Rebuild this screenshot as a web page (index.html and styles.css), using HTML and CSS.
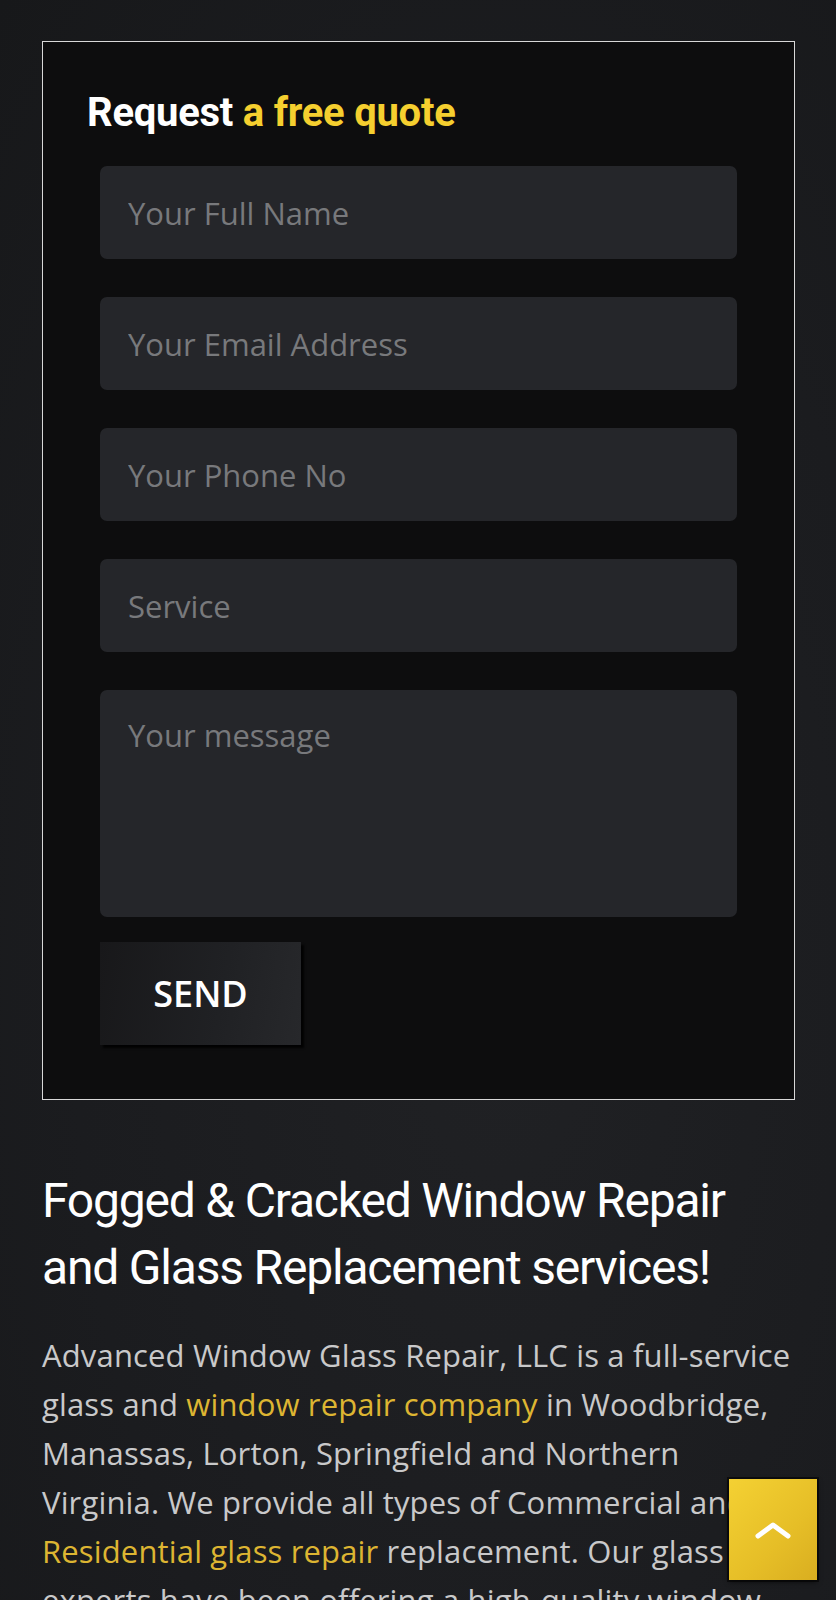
FILE: index.html
```
<!DOCTYPE html>
<html lang="en">
<head>
  <meta charset="UTF-8">
  <title>Request a free quote</title>
  <link rel="stylesheet" href="styles.css">
</head>
<body>

  <div class="page">
    <div class="quote-box">
      <h3 class="quote-title">Request <span>a free quote</span></h3>

      <form class="quote-form" onsubmit="return false;">
        <input type="text" placeholder="Your Full Name">
        <input type="email" placeholder="Your Email Address">
        <input type="tel" placeholder="Your Phone No">
        <input type="text" placeholder="Service">
        <textarea placeholder="Your message"></textarea>
        <button type="submit" class="send">SEND</button>
      </form>
    </div>

    <h1 class="intro-title">Fogged &amp; Cracked Window Repair and Glass Replacement services!</h1>

    <p class="intro-text">
      Advanced Window Glass Repair, LLC is a full-service glass and <a href="#">window repair company</a> in Woodbridge, Manassas, Lorton, Springfield and Northern Virginia. We provide all types of Commercial and <a href="#">Residential glass repair</a> replacement. Our glass experts have been offering a high-quality window repair service for many years.
    </p>
  </div>

  <a href="#" class="to-top" aria-label="Back to top">
    <svg width="38" height="24" viewBox="0 0 38 24">
      <polyline points="4,18 19,7 34,18" fill="none" stroke="#fff" stroke-width="5" stroke-linecap="round" stroke-linejoin="round"/>
    </svg>
  </a>

</body>
</html>
```

FILE: styles.css
```
:root {
  --bg: #1c1d20;
  --box: #0d0d0e;
  --field: #25262a;
  --gold: #f5cf2f;
  --link: #ddb532;
}

html, body {
  margin: 0;
  padding: 0;
}

body {
  background: radial-gradient(ellipse at 60% 60%, #202124 0%, #1b1c1f 60%, #17181a 100%);
  background-color: var(--bg);
  min-height: 1600px;
  font-family: 'Open Sans', sans-serif;
  color: #fff;
}

.page {
  padding: 41px 41px 0 42px;
}

.quote-box {
  background-color: var(--box);
  border: 1px solid #d8d8d8;
  padding: 47px 0 54px 44px;
}

.quote-title {
  font-family: Roboto, sans-serif;
  font-weight: 700;
  font-size: 40px;
  line-height: 48px;
  letter-spacing: -0.25px;
  margin: 0 0 29px;
  color: #fff;
}

.quote-title span {
  color: var(--gold);
}

.quote-form {
  margin-left: 13px;
  width: 637px;
}

.quote-form input,
.quote-form textarea {
  display: block;
  box-sizing: border-box;
  width: 100%;
  height: 93px;
  margin: 0 0 38px;
  padding: 0 28px;
  border: none;
  border-radius: 7px;
  background-color: var(--field);
  font-family: 'Open Sans', sans-serif;
  font-size: 31px;
  color: #ddd;
  outline: none;
}

.quote-form textarea {
  height: 227px;
  padding: 24px 28px;
  margin-bottom: 25px;
  resize: none;
}

.quote-form ::placeholder {
  color: #78797c;
}

button.send {
  display: block;
  width: 201px;
  height: 103px;
  border: none;
  background: linear-gradient(100deg, #18181a 0%, #202124 60%, #27282b 100%);
  box-shadow: 3px 3px 2px rgba(0, 0, 0, 0.85);
  font-family: 'Open Sans', sans-serif;
  font-weight: 600;
  font-size: 36px;
  color: #fff;
  cursor: pointer;
}

.intro-title {
  font-family: Roboto, sans-serif;
  font-weight: 400;
  font-size: 48px;
  line-height: 67px;
  letter-spacing: -1.2px;
  margin: 67px 0 30px;
  color: #fff;
}

.intro-text {
  font-size: 31px;
  line-height: 49px;
  letter-spacing: 0.15px;
  color: #c9c9ca;
  margin: 0;
}

.intro-text a {
  color: var(--link);
  text-decoration: none;
}

.to-top {
  position: fixed;
  right: 19px;
  bottom: 20px;
  width: 88px;
  height: 101px;
  display: flex;
  align-items: center;
  justify-content: center;
  background: linear-gradient(135deg, #f4d133 0%, #e6be27 60%, #d9ae20 100%);
  box-shadow: 0 0 0 2px rgba(0, 0, 0, 0.55), 0 2px 5px rgba(0, 0, 0, 0.6);
}
```
